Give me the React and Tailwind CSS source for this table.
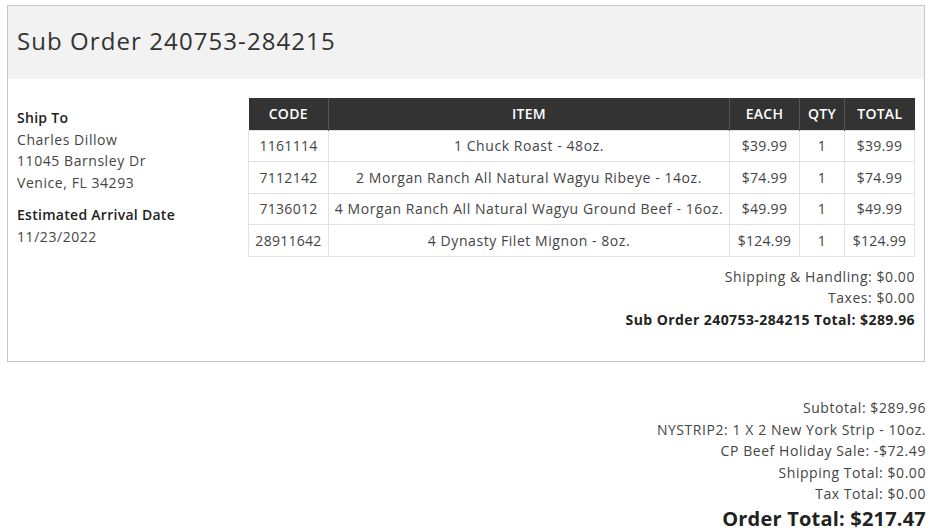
const items = [
  { code: "1161114", name: "1 Chuck Roast - 48oz.", each: "$39.99", qty: 1, total: "$39.99" },
  { code: "7112142", name: "2 Morgan Ranch All Natural Wagyu Ribeye - 14oz.", each: "$74.99", qty: 1, total: "$74.99" },
  { code: "7136012", name: "4 Morgan Ranch All Natural Wagyu Ground Beef - 16oz.", each: "$49.99", qty: 1, total: "$49.99" },
  { code: "28911642", name: "4 Dynasty Filet Mignon - 8oz.", each: "$124.99", qty: 1, total: "$124.99" },
];

export default function App() {
  return (
    <div className="min-h-screen bg-white pl-[7px] pr-[4px] pt-[5px] font-['Open_Sans',sans-serif] text-[14px] tracking-[0.04em] text-[#444]">
      {/* Sub order box */}
      <div className="mr-[1px] border border-[#c8c8c8]">
        <div className="flex h-[73px] items-center bg-[#f2f2f2] px-[9px] pb-[3px]">
          <h1 className="text-[24px] font-normal tracking-[0.045em] text-[#333]">Sub Order 240753-284215</h1>
        </div>

        <div className="flex pt-[19px] pb-[31px] pl-[9px] pr-[9px]">
          <div className="w-[231px] shrink-0 pt-[9px] leading-[21.5px]">
            <p className="font-semibold tracking-[0.02em] text-[#222]">Ship To</p>
            <p>Charles Dillow</p>
            <p>11045 Barnsley Dr</p>
            <p>Venice, FL 34293</p>
            <p className="mt-[11px] font-semibold tracking-[0.02em] text-[#222]">Estimated Arrival Date</p>
            <p>11/23/2022</p>
          </div>

          <div className="flex-1">
            <table className="w-full border-collapse text-center">
              <thead>
                <tr className="h-[32px] bg-[#333] text-white">
                  <th className="w-[80px] border-r border-[#555] font-semibold tracking-[0.02em]">CODE</th>
                  <th className="border-r border-[#555] font-semibold tracking-[0.02em]">ITEM</th>
                  <th className="w-[70px] border-r border-[#555] font-semibold tracking-[0.02em]">EACH</th>
                  <th className="w-[45px] border-r border-[#555] font-semibold tracking-[0.02em]">QTY</th>
                  <th className="w-[70px] font-semibold tracking-[0.02em]">TOTAL</th>
                </tr>
              </thead>
              <tbody>
                {items.map((it) => (
                  <tr key={it.code} className="h-[31.5px]">
                    <td className="border border-[#e2e2e2] tracking-[0.02em]">{it.code}</td>
                    <td className="border border-[#e2e2e2]">{it.name}</td>
                    <td className="border border-[#e2e2e2] tracking-[0.02em]">{it.each}</td>
                    <td className="border border-[#e2e2e2]">{it.qty}</td>
                    <td className="border border-[#e2e2e2] tracking-[0.02em]">{it.total}</td>
                  </tr>
                ))}
              </tbody>
            </table>

            <div className="mt-[9px] text-right leading-[21.5px]">
              <p>Shipping &amp; Handling: $0.00</p>
              <p>Taxes: $0.00</p>
              <p className="font-bold tracking-[0.03em] text-[#222]">Sub Order 240753-284215 Total: $289.96</p>
            </div>
          </div>
        </div>
      </div>

      {/* Order totals */}
      <div className="mt-[35px] text-right leading-[21.5px]">
        <p>Subtotal: $289.96</p>
        <p>NYSTRIP2: 1 X 2 New York Strip - 10oz.</p>
        <p>CP Beef Holiday Sale: -$72.49</p>
        <p>Shipping Total: $0.00</p>
        <p>Tax Total: $0.00</p>
        <p className="text-[20px] font-bold leading-[28px] tracking-[0.01em] text-[#222]">Order Total: $217.47</p>
      </div>
    </div>
  );
}
